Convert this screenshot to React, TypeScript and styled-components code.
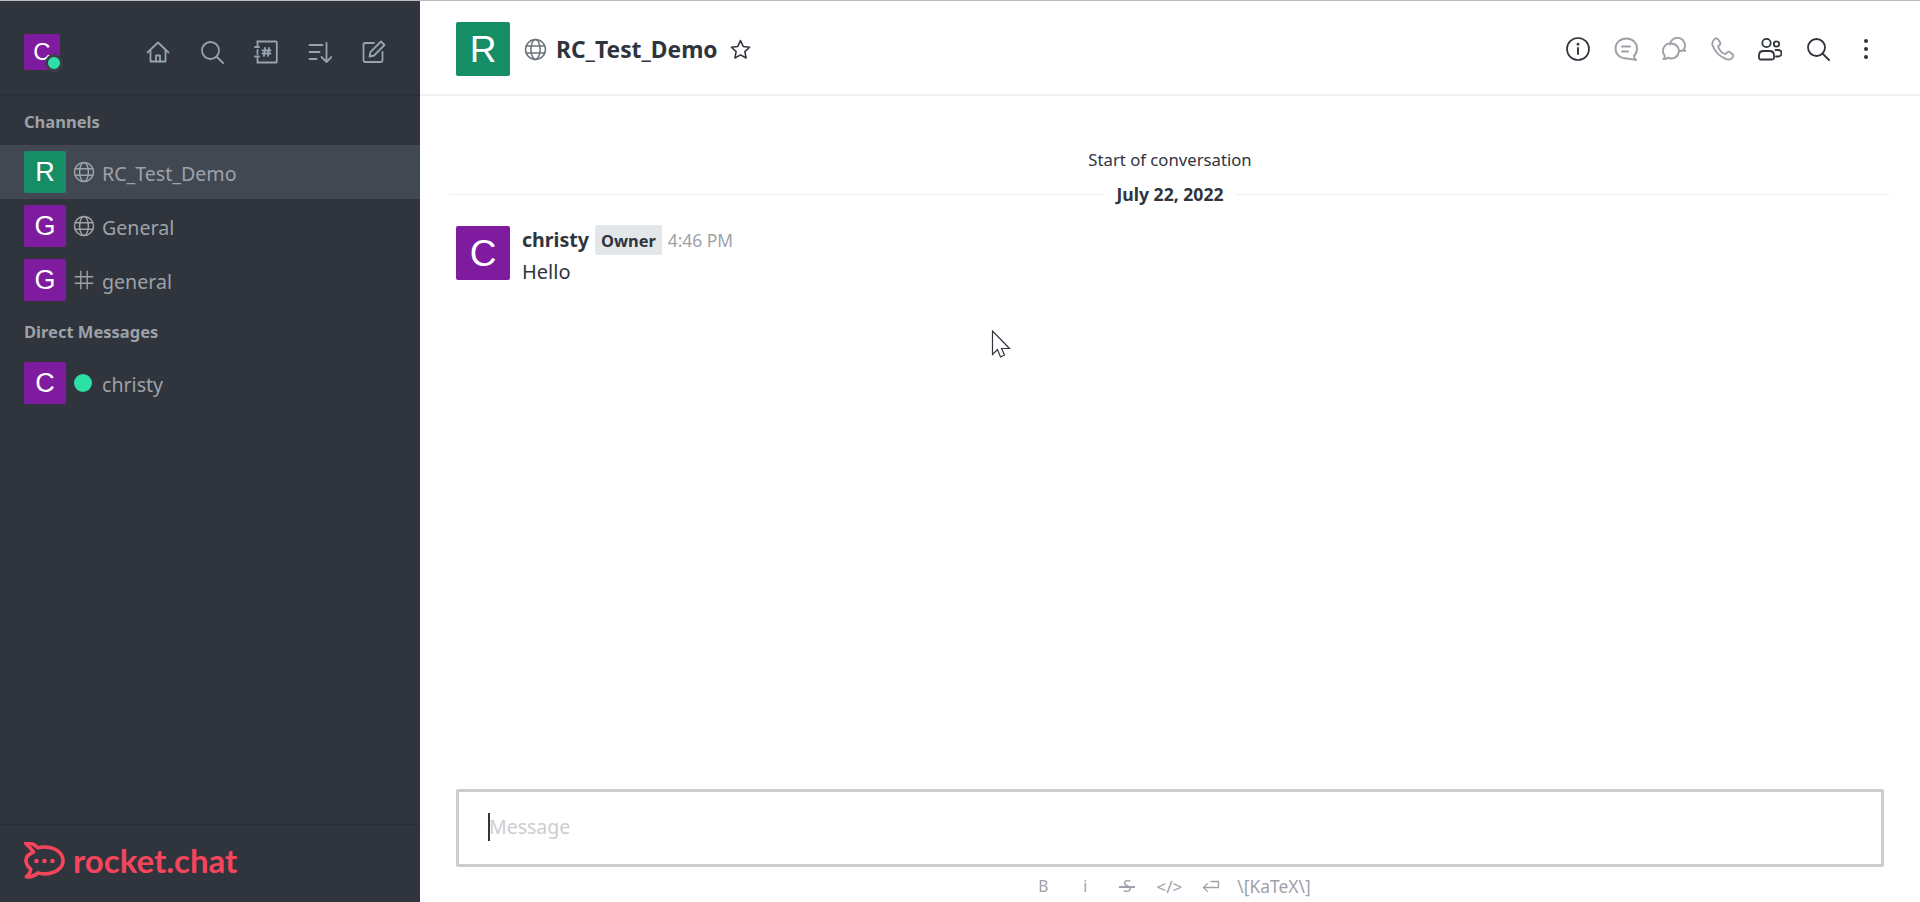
import React from "react";
import styled, { createGlobalStyle } from "styled-components";

const Global = createGlobalStyle`
  html, body { margin: 0; padding: 0; height: 100%; background: #fff; overflow: hidden; }
  #root { height: 100%; }
  * { box-sizing: border-box; }
  body { font-family: "Noto Sans", "Open Sans", sans-serif; color: #2f343d; }
`;

const Page = styled.div`
  position: relative;
  display: flex;
  flex-direction: column;
  width: 1920px;
  height: 902px;
  border-top: 1px solid #bcbcbc;
`;
const Body = styled.div`
  flex: 1;
  display: flex;
  min-height: 0;
`;
const Sidebar = styled.aside`
  width: 420px;
  flex: none;
  background: #2f343d;
  display: flex;
  flex-direction: column;
`;
const SideHeader = styled.div`
  height: 95px;
  flex: none;
  display: flex;
  align-items: center;
  padding: 9px 34px 0 24px;
  border-bottom: 2px solid #2a2e36;
`;
const SideTools = styled.div`
  margin-left: auto;
  display: flex;
  gap: 30px;
  color: #96a3b0;
`;
const Avatar = styled.div<{ $bg: string; $size: number; $font: number }>`
  position: relative;
  width: ${(p) => p.$size}px;
  height: ${(p) => p.$size}px;
  flex: none;
  border-radius: 2px;
  background: ${(p) => p.$bg};
  color: #fff;
  display: flex;
  align-items: center;
  justify-content: center;
  font-family: "Liberation Sans", Arial, sans-serif;
  font-size: ${(p) => p.$font}px;
  line-height: 1;
`;
const HeaderBadge = styled.span`
  position: absolute;
  right: -3px;
  bottom: -2px;
  width: 18px;
  height: 18px;
  border-radius: 50%;
  background: #2de0a5;
  border: 3px solid #3a3f49;
`;
const SideHeading = styled.div<{ $top: number; $bottom: number }>`
  padding: 0 24px;
  margin: ${(p) => p.$top}px 0 ${(p) => p.$bottom}px;
  font-size: 16.5px;
  line-height: 22px;
  font-weight: 700;
  color: #9ea2a8;
`;
const Row = styled.div<{ $active?: boolean }>`
  height: 54px;
  display: flex;
  align-items: center;
  padding: 0 24px;
  background: ${(p) => (p.$active ? "#414852" : "transparent")};
`;
const RowIcon = styled.span`
  width: 26px;
  margin-left: 7px;
  display: flex;
  justify-content: flex-start;
  color: #9ea2a8;
`;
const RowName = styled.span`
  margin-left: 3px;
  padding-top: 3px;
  font-size: 19.6px;
  line-height: 26px;
  color: #9ea2a8;
`;
const StatusDot = styled.span`
  width: 18px;
  height: 18px;
  margin: 0 3px 1px 1px;
  border-radius: 50%;
  background: #2de0a5;
`;
const SideFooter = styled.div`
  margin-top: auto;
  height: 78px;
  flex: none;
  display: flex;
  align-items: center;
  gap: 8px;
  padding: 0 24px 6px;
  border-top: 1px solid #2a2e36;
  color: #f5455c;
`;
const LogoText = styled.span`
  font-family: "Lato", sans-serif;
  font-size: 33px;
  font-weight: 700;
  line-height: 1;
  color: #f5455c;
`;

const Main = styled.main`
  flex: 1;
  min-width: 0;
  display: flex;
  flex-direction: column;
`;
const RoomHeader = styled.header`
  height: 95px;
  flex: none;
  display: flex;
  align-items: center;
  padding: 3px 42px 0 36px;
  border-bottom: 2px solid #f2f3f5;
`;
const RoomGlobe = styled.span`
  display: flex;
  margin-left: 14px;
  color: #6c727a;
`;
const RoomTitle = styled.h1`
  margin: 2px 0 0 9px;
  font-size: 22.8px;
  line-height: 30px;
  font-weight: 700;
  color: #2f343d;
`;
const StarButton = styled.span`
  display: flex;
  margin-left: 12px;
  color: #2f343d;
`;
const RoomTools = styled.div`
  margin-left: auto;
  display: flex;
  gap: 24px;
`;
const ToolIcon = styled.span<{ $muted?: boolean }>`
  display: flex;
  width: 24px;
  height: 24px;
  color: ${(p) => (p.$muted ? "#9ea2a8" : "#2f343d")};
`;
const Feed = styled.section`
  flex: 1;
  min-height: 0;
  display: flex;
  flex-direction: column;
  padding: 0 30px;
`;
const StartNote = styled.div`
  margin-top: 52px;
  text-align: center;
  font-size: 16.7px;
  line-height: 24px;
  color: #2f343d;
`;
const DateDivider = styled.div`
  margin-top: 12px;
  display: flex;
  align-items: center;
  gap: 12px;
  font-size: 17.6px;
  font-weight: 700;
  line-height: 20px;
  color: #2f343d;
  &::before, &::after {
    content: "";
    flex: 1;
    height: 1px;
    background: #eeeff1;
  }
`;
const Message = styled.article`
  margin-top: 22px;
  padding-left: 6px;
  display: flex;
  gap: 12px;
`;
const MessageBody = styled.div`
  display: flex;
  flex-direction: column;
`;
const MessageMeta = styled.div`
  display: flex;
  align-items: center;
  gap: 6px;
  height: 30px;
  margin-top: -1px;
`;
const Author = styled.span`
  font-size: 19.6px;
  font-weight: 700;
  line-height: 30px;
`;
const RoleBadge = styled.span`
  height: 30px;
  padding: 0 6px;
  display: flex;
  align-items: center;
  border-radius: 2px;
  background: #e4e7ea;
  font-size: 16.4px;
  font-weight: 700;
  color: #2f343d;
`;
const Time = styled.span`
  font-size: 17.4px;
  color: #9ea2a8;
`;
const MessageText = styled.p`
  margin: 2px 0 0;
  font-size: 20px;
  line-height: 30px;
  color: #2f343d;
`;
const Composer = styled.div`
  flex: none;
  padding: 0 36px;
`;
const InputBox = styled.div`
  height: 78px;
  display: flex;
  align-items: center;
  padding: 0 0 3px 29px;
  border: 3px solid #cbced1;
  border-radius: 2px;
  font-size: 19.5px;
  color: #cbced1;
`;
const Caret = styled.span`
  width: 2px;
  height: 28px;
  margin-right: -1px;
  background: #2f343d;
`;
const Formatting = styled.div`
  height: 35px;
  display: flex;
  align-items: center;
  justify-content: center;
  gap: 24px;
  padding: 3px 0 0 5px;
  color: #9ea2a8;
`;
const FormatItem = styled.span<{ $code?: boolean }>`
  display: flex;
  justify-content: center;
  width: 18px;
  font-size: ${(p) => (p.$code ? 17 : 15.5)}px;
  letter-spacing: ${(p) => (p.$code ? "0" : "0")};
`;
const StruckItem = styled(FormatItem)`
  position: relative;
  &::after {
    content: "";
    position: absolute;
    left: 1px;
    right: 1px;
    top: 50%;
    height: 1.5px;
    background: #9ea2a8;
  }
`;
const KatexLabel = styled.span`
  margin-left: -7px;
  font-size: 17.4px;
  color: #9ea2a8;
`;
const Pointer = styled.svg`
  position: absolute;
  left: 991px;
  top: 329px;
`;

type IP = { size?: number };
const Svg: React.FC<IP & { children: React.ReactNode; sw?: number }> = ({ size = 24, sw = 1.8, children }) => (
  <svg width={size} height={size} viewBox="0 0 24 24" fill="none" stroke="currentColor" strokeWidth={sw} strokeLinecap="round" strokeLinejoin="round">
    {children}
  </svg>
);
const Globe: React.FC<IP> = ({ size = 22 }) => (
  <Svg size={size} sw={1.6}>
    <circle cx="12" cy="12" r="10.4" />
    <ellipse cx="12" cy="12" rx="4.8" ry="10.4" />
    <path d="M2.4 8.4h19.2M2.4 15.6h19.2" />
  </Svg>
);
const Hash: React.FC<IP> = ({ size = 22 }) => (
  <Svg size={size} sw={1.5}>
    <path d="M8.5 2.5v19M15.5 2.5v19M2.5 8.5h19M2.5 15.5h19" />
  </Svg>
);
const Home = () => (
  <Svg>
    <path d="M1.5 12.5 12 2.5l10.5 10" />
    <path d="M4.5 10.5V21.5h15V10.5" />
    <path d="M10 21.5v-6h4v6" />
  </Svg>
);
const Search = () => (
  <Svg>
    <circle cx="10.5" cy="10.5" r="8.5" />
    <path d="m17 17 6 6" />
  </Svg>
);
const Directory = () => (
  <Svg>
    <path d="M3.5 1.5h18.5a0.8 0.8 0 0 1 .8.8v19.4a0.8 0.8 0 0 1-.8.8H3.5" />
    <path d="M3.5 1.5v4M3.5 10v4M3.5 18.5v4M1 7h4M1 16.5h4" />
    <path d="M11 8l-1 8M15 8l-1 8M8.5 10.5h8M8.5 13.5h8" />
  </Svg>
);
const Sort = () => (
  <Svg>
    <path d="M1.5 5h13M1.5 12h10M1.5 19h7" />
    <path d="M18.5 3v19M13.5 17l5 5 5-5" />
  </Svg>
);
const Edit = () => (
  <Svg>
    <path d="M12 3H3a1.5 1.5 0 0 0-1.5 1.5v16A1.5 1.5 0 0 0 3 22h16a1.5 1.5 0 0 0 1.5-1.5V12" />
    <path d="M19 1.5 22.5 5 12 15.5l-4.500 1 1-4.500z" />
  </Svg>
);
const Info = () => (
  <Svg sw={1.7}>
    <circle cx="12" cy="12" r="11" />
    <path d="M12 11v6" strokeWidth="1.9" />
    <circle cx="12" cy="7.3" r="0.6" />
  </Svg>
);
const Chat = () => (
  <Svg sw={2}>
    <path d="M12.5 1.500C6 1.500 1.500 5.800 1.500 11.500s4.500 10 11 10c3 0 5 1 9.500 1.500-1.300-1-2-2.400-2-4 2-2 3-4.500 3-7.500 0-5.700-4.500-10-10.500-10z" />
    <path d="M8 9.500h8M8 14.500h6" />
  </Svg>
);
const Thread = () => (
  <Svg sw={1.9}>
    <path d="M9.500 6.500a7.500 7.500 0 1 1-3.500 14.200c-1.200.9-2.800 1.400-4.500 1.300.9-.9 1.300-2 1.300-3.200A7.500 7.500 0 0 1 9.500 6.500z" />
    <path d="M8 7.500A7.500 7.500 0 1 1 22 12c.2.8.6 1.300 1.200 1.800-1.100.2-2.100 0-3-.5-.9.5-2 .8-3.200.8" />
  </Svg>
);
const Phone = () => (
  <Svg sw={1.9}>
    <path d="M5 1.800c1-.8 2.200-.6 3 .4l2 3c.6 1 .4 2-.5 2.800l-1.500 1.200c1 3.500 3.500 6.500 7.500 8l1.500-1.600c.8-.8 2-1 3-.3l2.500 1.900c1 .8 1 2 .3 3-1.500 2-4 3-6.800 1.800C9.500 19.500 4.500 14 2.500 8c-.7-2.500.5-4.800 2.500-6.200z" />
  </Svg>
);
const Team = () => (
  <Svg sw={1.8}>
    <circle cx="8.500" cy="6" r="4.200" />
    <circle cx="18.500" cy="7" r="2.700" />
    <path d="M3 22.500A1.800 1.800 0 0 1 1 20.700v-2.200c0-3 2-4.500 4.500-4.500h6c2.500 0 4.500 1.500 4.500 4.500v2.200a1.800 1.800 0 0 1-1.800 1.800z" />
    <path d="M17.500 13h2.500c2.500 0 3.500 1.500 3.500 3.200s-1 3.300-3.500 3.300h-2" />
  </Svg>
);
const Kebab = () => (
  <svg width="24" height="24" viewBox="0 0 24 24" fill="currentColor">
    <circle cx="12" cy="4" r="2" />
    <circle cx="12" cy="12" r="2" />
    <circle cx="12" cy="20" r="2" />
  </svg>
);
const Star = () => (
  <Svg size={21}>
    <path d="m12 1.800 3.100 6.700 7.300.9-5.400 5 1.400 7.300L12 18.100l-6.400 3.600L7 14.400l-5.400-5 7.300-.9z" />
  </Svg>
);
const EnterIcon = () => (
  <Svg size={20} sw={1.7}>
    <path d="M12 6h10v8H2" />
    <path d="m7 9-5 5 5 5" />
  </Svg>
);
const LogoMark = () => (
  <svg width="41" height="37" viewBox="0 0 41 37" fill="none">
    <path d="M9 10C5 5 3 3 0.500 0.500c4-.5 9 1 13 5C16 5 18 4.800 20.500 4.800 32 4.800 40 11 40 19s-8 14-19.500 14c-2.500 0-5-.3-7-1-3 3-8 4.500-12 4 2.500-2 4.500-5 4.500-8C3 25.500 1 22.500 1 19c0-3.700 3-7 8-9z" stroke="currentColor" strokeWidth="3.800" strokeLinejoin="round" transform="translate(1 .5) scale(.95)" />
    <circle cx="12.500" cy="19" r="2.300" fill="currentColor" />
    <circle cx="20.500" cy="19" r="2.300" fill="currentColor" />
    <circle cx="28.500" cy="19" r="2.300" fill="currentColor" />
  </svg>
);

const PURPLE = "#7f1b9f";
const GREEN = "#158d65";

export default function App() {
  return (
    <Page>
      <Global />
      <Body>
        <Sidebar>
          <SideHeader>
            <Avatar $bg={PURPLE} $size={36} $font={24}>
              C
              <HeaderBadge />
            </Avatar>
            <SideTools>
              <Home />
              <Search />
              <Directory />
              <Sort />
              <Edit />
            </SideTools>
          </SideHeader>
          <SideHeading $top={15} $bottom={12}>Channels</SideHeading>
          <Row $active>
            <Avatar $bg={GREEN} $size={42} $font={27}>R</Avatar>
            <RowIcon><Globe /></RowIcon>
            <RowName>RC_Test_Demo</RowName>
          </Row>
          <Row>
            <Avatar $bg={PURPLE} $size={42} $font={27}>G</Avatar>
            <RowIcon><Globe /></RowIcon>
            <RowName>General</RowName>
          </Row>
          <Row>
            <Avatar $bg={PURPLE} $size={42} $font={27}>G</Avatar>
            <RowIcon><Hash /></RowIcon>
            <RowName>general</RowName>
          </Row>
          <SideHeading $top={14} $bottom={13}>Direct Messages</SideHeading>
          <Row>
            <Avatar $bg={PURPLE} $size={42} $font={27}>C</Avatar>
            <RowIcon><StatusDot /></RowIcon>
            <RowName>christy</RowName>
          </Row>
          <SideFooter>
            <LogoMark />
            <LogoText>rocket.chat</LogoText>
          </SideFooter>
        </Sidebar>
        <Main>
          <RoomHeader>
            <Avatar $bg={GREEN} $size={54} $font={37}>R</Avatar>
            <RoomGlobe><Globe size={23} /></RoomGlobe>
            <RoomTitle>RC_Test_Demo</RoomTitle>
            <StarButton><Star /></StarButton>
            <RoomTools>
              <ToolIcon><Info /></ToolIcon>
              <ToolIcon $muted><Chat /></ToolIcon>
              <ToolIcon $muted><Thread /></ToolIcon>
              <ToolIcon $muted><Phone /></ToolIcon>
              <ToolIcon><Team /></ToolIcon>
              <ToolIcon><Search /></ToolIcon>
              <ToolIcon><Kebab /></ToolIcon>
            </RoomTools>
          </RoomHeader>
          <Feed>
            <StartNote>Start of conversation</StartNote>
            <DateDivider>July 22, 2022</DateDivider>
            <Message>
              <Avatar $bg={PURPLE} $size={54} $font={37}>C</Avatar>
              <MessageBody>
                <MessageMeta>
                  <Author>christy</Author>
                  <RoleBadge>Owner</RoleBadge>
                  <Time>4:46 PM</Time>
                </MessageMeta>
                <MessageText>Hello</MessageText>
              </MessageBody>
            </Message>
          </Feed>
          <Composer>
            <InputBox><Caret />Message</InputBox>
            <Formatting>
              <FormatItem>B</FormatItem>
              <FormatItem>i</FormatItem>
              <StruckItem>S</StruckItem>
              <FormatItem $code>&lt;/&gt;</FormatItem>
              <FormatItem><EnterIcon /></FormatItem>
              <KatexLabel>\[KaTeX\]</KatexLabel>
            </Formatting>
          </Composer>
        </Main>
      </Body>
      <Pointer width="20" height="29" viewBox="0 0 20 29" fill="#fff" stroke="#2f343d" strokeWidth="1.200" strokeLinejoin="miter">
        <path d="M1.500 1v23.500l5-5 3 7.500 4-2-3-6.500h8z" />
      </Pointer>
    </Page>
  );
}
